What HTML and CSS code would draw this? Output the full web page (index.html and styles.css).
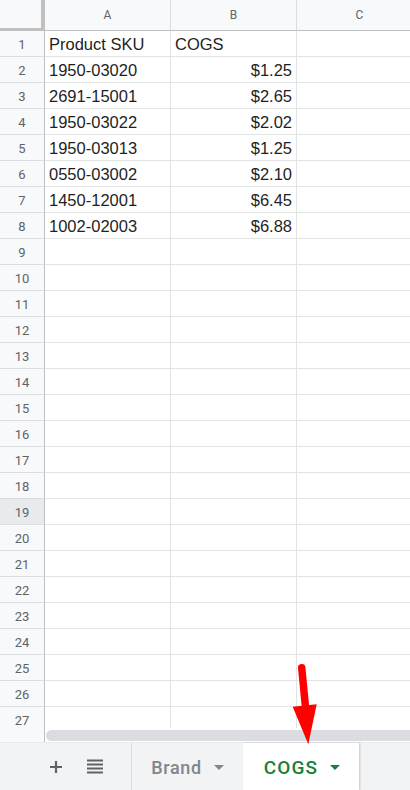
FILE: index.html
```html
<!DOCTYPE html>
<html lang="en">
<head>
  <meta charset="UTF-8" />
  <meta name="viewport" content="width=device-width, initial-scale=1.0" />
  <title>COGS - Google Sheets</title>
  <link rel="stylesheet" href="styles.css">
</head>
<body>
  <div class="hoja">
    <div class="grid">
      <div class="esquina"></div>
      <div class="col-head">A</div>
      <div class="col-head">B</div>
      <div class="col-head">C</div>

      <div class="row-head">1</div><div class="celda">Product SKU</div><div class="celda">COGS</div><div class="celda"></div>
      <div class="row-head">2</div><div class="celda">1950-03020</div><div class="celda num">$1.25</div><div class="celda"></div>
      <div class="row-head">3</div><div class="celda">2691-15001</div><div class="celda num">$2.65</div><div class="celda"></div>
      <div class="row-head">4</div><div class="celda">1950-03022</div><div class="celda num">$2.02</div><div class="celda"></div>
      <div class="row-head">5</div><div class="celda">1950-03013</div><div class="celda num">$1.25</div><div class="celda"></div>
      <div class="row-head">6</div><div class="celda">0550-03002</div><div class="celda num">$2.10</div><div class="celda"></div>
      <div class="row-head">7</div><div class="celda">1450-12001</div><div class="celda num">$6.45</div><div class="celda"></div>
      <div class="row-head">8</div><div class="celda">1002-02003</div><div class="celda num">$6.88</div><div class="celda"></div>
      <div class="row-head">9</div><div class="celda"></div><div class="celda"></div><div class="celda"></div>
      <div class="row-head">10</div><div class="celda"></div><div class="celda"></div><div class="celda"></div>
      <div class="row-head">11</div><div class="celda"></div><div class="celda"></div><div class="celda"></div>
      <div class="row-head">12</div><div class="celda"></div><div class="celda"></div><div class="celda"></div>
      <div class="row-head">13</div><div class="celda"></div><div class="celda"></div><div class="celda"></div>
      <div class="row-head">14</div><div class="celda"></div><div class="celda"></div><div class="celda"></div>
      <div class="row-head">15</div><div class="celda"></div><div class="celda"></div><div class="celda"></div>
      <div class="row-head">16</div><div class="celda"></div><div class="celda"></div><div class="celda"></div>
      <div class="row-head">17</div><div class="celda"></div><div class="celda"></div><div class="celda"></div>
      <div class="row-head">18</div><div class="celda"></div><div class="celda"></div><div class="celda"></div>
      <div class="row-head hover">19</div><div class="celda"></div><div class="celda"></div><div class="celda"></div>
      <div class="row-head">20</div><div class="celda"></div><div class="celda"></div><div class="celda"></div>
      <div class="row-head">21</div><div class="celda"></div><div class="celda"></div><div class="celda"></div>
      <div class="row-head">22</div><div class="celda"></div><div class="celda"></div><div class="celda"></div>
      <div class="row-head">23</div><div class="celda"></div><div class="celda"></div><div class="celda"></div>
      <div class="row-head">24</div><div class="celda"></div><div class="celda"></div><div class="celda"></div>
      <div class="row-head">25</div><div class="celda"></div><div class="celda"></div><div class="celda"></div>
      <div class="row-head">26</div><div class="celda"></div><div class="celda"></div><div class="celda"></div>
      <div class="row-head">27</div><div class="celda"></div><div class="celda"></div><div class="celda"></div>
    </div>
  </div>

  <div class="scroll">
    <div class="scroll-izq"></div>
    <div class="scroll-pista"><div class="scroll-barra"></div></div>
  </div>

  <div class="pestanas">
    <div class="acciones">
      <svg class="icono" width="14" height="14" viewBox="0 0 14 14">
        <path d="M7 1v12M1 7h12" stroke="#5f6368" stroke-width="2.2" />
      </svg>
      <svg class="icono" width="16" height="15" viewBox="0 0 16 15">
        <path d="M0 1.5h16M0 5.5h16M0 9.5h16M0 13.5h16" stroke="#5f6368" stroke-width="2.2" />
      </svg>
    </div>
    <div class="pestana">
      <span>Brand</span>
      <span class="triangulo"></span>
    </div>
    <div class="pestana activa">
      <span>COGS</span>
      <span class="triangulo"></span>
    </div>
  </div>

  <!-- flecha roja que señala la pestaña -->
  <svg class="flecha" width="40" height="90" viewBox="0 0 40 90">
    <path d="M13.7 7.7L17.4 46" stroke="#ff0000" stroke-width="7.5" stroke-linecap="round" />
    <polygon points="4.7,46.7 28.7,44.3 20.3,84.3" fill="#ff0000" />
  </svg>
</body>
</html>
```

FILE: styles.css
```css
body {
  margin: 0;
  width: 410px;
  height: 790px;
  overflow: hidden;
  position: relative;
  background-color: #ffffff;
  font-family: 'Liberation Sans', Arial, sans-serif;
}

.hoja {
  height: 728px;
  overflow: hidden;
}

.grid {
  display: grid;
  grid-template-columns: 45px 126px 126px 126px;
  grid-template-rows: 31px;
  grid-auto-rows: 26px;
  width: 423px;
}

.grid > div {
  box-sizing: border-box;
}

.esquina {
  background-color: #f8f9fa;
  border-right: 4px solid #c0c0c0;
  border-bottom: 3px solid #c0c0c0;
}

.col-head {
  background-color: #f8f9fa;
  border-right: 1px solid #dadce0;
  border-bottom: 1px solid #c0c0c0;
  color: #5f6368;
  font-family: Roboto, sans-serif;
  font-size: 12px;
  display: flex;
  align-items: center;
  justify-content: center;
}

.row-head {
  background-color: #f8f9fa;
  border-right: 1px solid #c0c0c0;
  border-bottom: 1px solid #dadce0;
  color: #5f6368;
  font-family: Roboto, sans-serif;
  font-size: 13px;
  display: flex;
  align-items: center;
  justify-content: center;
  padding-top: 1px;
}

.row-head.hover {
  background-color: #e8eaed;
}

.celda {
  border-right: 1px solid #e2e3e3;
  border-bottom: 1px solid #e2e3e3;
  color: #1f1f1f;
  font-size: 16.5px;
  padding: 1px 4px 0;
  display: flex;
  align-items: center;
  white-space: nowrap;
}

.celda.num {
  justify-content: flex-end;
}

.scroll {
  display: flex;
  height: 14px;
}

.scroll-izq {
  width: 44px;
  background-color: #f8f9fa;
  border-right: 1px solid #c0c0c0;
}

.scroll-pista {
  flex: 1;
  padding: 2px 0 1px 1px;
  background-color: #ffffff;
}

.scroll-barra {
  height: 11px;
  margin-right: -20px;
  background-color: #dadce0;
  border-radius: 6px;
}

.pestanas {
  display: flex;
  height: 48px;
  background-color: #f1f3f4;
  border-top: 1px solid #e8eaed;
  box-sizing: border-box;
}

.acciones {
  width: 132px;
  display: flex;
  align-items: center;
  padding-left: 49px;
  gap: 24px;
  box-sizing: border-box;
  border-right: 1px solid #dadce0;
}

.icono {
  display: block;
}

.pestana {
  width: 111px;
  display: flex;
  align-items: center;
  justify-content: center;
  gap: 12px;
  font-family: Roboto, sans-serif;
  font-size: 18px;
  font-weight: 500;
  color: #80868b;
  letter-spacing: 0.6px;
  padding-top: 1px;
}

.pestana.activa {
  width: 116px;
  background-color: #ffffff;
  color: #188038;
  font-size: 19px;
  letter-spacing: 1.1px;
  padding-left: 2px;
  box-sizing: border-box;
  box-shadow: 1px 0 2px rgba(60, 64, 67, 0.25);
}

.triangulo {
  width: 0;
  height: 0;
  border-left: 5px solid transparent;
  border-right: 5px solid transparent;
  border-top: 5px solid currentColor;
}

.flecha {
  position: absolute;
  left: 288px;
  top: 660px;
}
```
